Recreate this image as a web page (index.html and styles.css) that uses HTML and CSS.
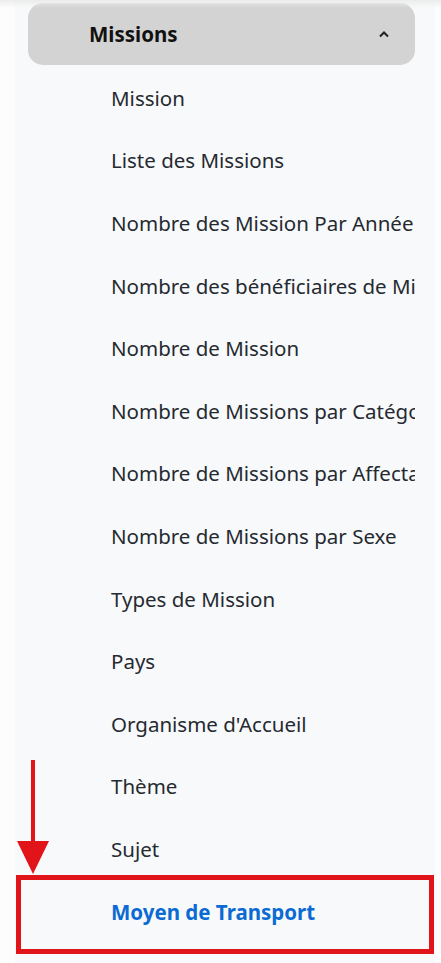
FILE: index.html
```html
<!DOCTYPE html>
<html lang="fr">
<head>
<meta charset="utf-8">
<link rel="stylesheet" href="styles.css">
</head>
<body>
<div class="page">
  <div class="topshade"></div>
  <nav class="panel">
    <div class="group-head">
      <span class="group-title">Missions</span>
      <svg class="chev" width="12" height="8" viewBox="0 0 12 8"><path d="M2 6.5 L6 2.5 L10 6.5" fill="none" stroke="#222" stroke-width="2"/></svg>
    </div>
    <ul class="items">
      <li class="item">Mission</li>
      <li class="item">Liste des Missions</li>
      <li class="item">Nombre des Mission Par Année</li>
      <li class="item">Nombre des bénéficiaires de Mission</li>
      <li class="item">Nombre de Mission</li>
      <li class="item">Nombre de Missions par Catégorie</li>
      <li class="item">Nombre de Missions par Affectation</li>
      <li class="item">Nombre de Missions par Sexe</li>
      <li class="item">Types de Mission</li>
      <li class="item">Pays</li>
      <li class="item">Organisme d'Accueil</li>
      <li class="item">Thème</li>
      <li class="item">Sujet</li>
      <li class="item active">Moyen de Transport</li>
    </ul>
  </nav>
  <div class="arrow">
    <div class="shaft"></div>
    <div class="head"></div>
  </div>
  <div class="highlight"></div>
</div>
</body>
</html>
```
FILE: styles.css
```css
html, body {
  margin: 0;
  padding: 0;
  background: #fdfdfe;
}
body {
  font-family: "Noto Sans", "Open Sans", sans-serif;
  color: #212529;
}
.page {
  position: relative;
  width: 441px;
  height: 963px;
  overflow: hidden;
}
.topshade {
  position: absolute;
  left: 0;
  top: 0;
  width: 441px;
  height: 8px;
  background: linear-gradient(#ececec, rgba(240,240,240,0));
  z-index: 2;
}
.panel {
  margin-left: 15px;
  width: 420px;
  height: 963px;
  background: #f8f9fa;
  padding-top: 3px;
  box-sizing: border-box;
  overflow: hidden;
}
.group-head {
  margin-left: 13px;
  width: 387px;
  height: 62px;
  background: #d3d3d3;
  border-radius: 15px;
  display: flex;
  align-items: center;
  justify-content: space-between;
  box-sizing: border-box;
  padding-left: 61px;
  padding-right: 25px;
}
.group-title {
  font-weight: 700;
  font-size: 20.5px;
  color: #111;
}
.chev {
  display: block;
}
.items {
  list-style: none;
  margin: 1.5px 0 0 0;
  padding: 0;
  width: 400px;
  overflow: hidden;
}
.item {
  height: 62.6px;
  display: flex;
  align-items: center;
  padding-left: 96px;
  font-size: 20.5px;
  white-space: nowrap;
  color: #252a31;
}
.item.active {
  color: #0b6bd3;
  font-weight: 700;
}
.arrow {
  position: absolute;
  left: 17px;
  top: 760px;
  width: 32px;
  display: flex;
  flex-direction: column;
  align-items: center;
}
.shaft {
  width: 4px;
  height: 81px;
  background: #e1141a;
}
.head {
  width: 0;
  height: 0;
  border-left: 16px solid transparent;
  border-right: 16px solid transparent;
  border-top: 33px solid #e1141a;
}
.highlight {
  position: absolute;
  left: 16px;
  top: 875px;
  width: 418px;
  height: 79px;
  border: 5px solid #e1141a;
  box-sizing: border-box;
}
```
